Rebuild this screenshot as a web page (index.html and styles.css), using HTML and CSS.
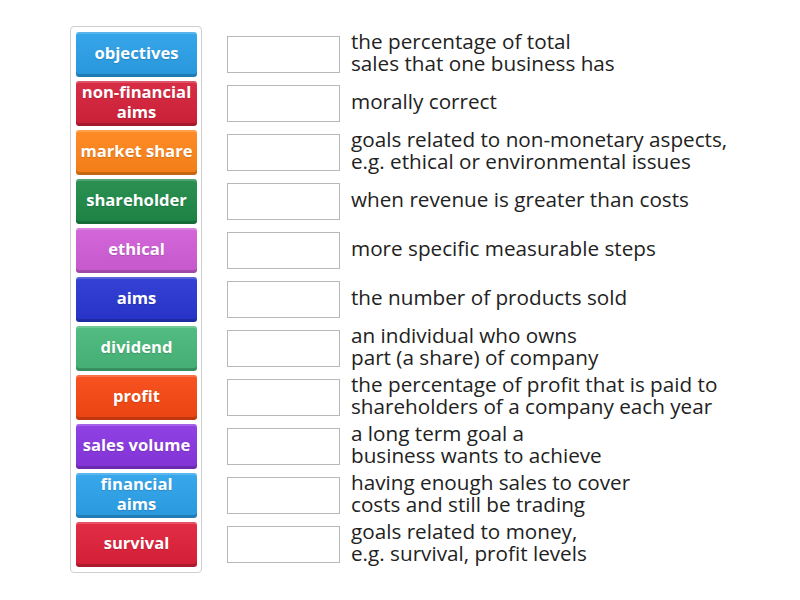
FILE: index.html
```html
<!DOCTYPE html>
<html>
<head>
<meta charset="utf-8">
<link rel="stylesheet" href="styles.css">
</head>
<body>
<div class="page">
  <div class="bank">
    <div class="tile c1">objectives</div>
    <div class="tile c2">non-financial<br>aims</div>
    <div class="tile c3">market share</div>
    <div class="tile c4">shareholder</div>
    <div class="tile c5">ethical</div>
    <div class="tile c6">aims</div>
    <div class="tile c7">dividend</div>
    <div class="tile c8">profit</div>
    <div class="tile c9">sales volume</div>
    <div class="tile c10">financial<br>aims</div>
    <div class="tile c11">survival</div>
  </div>
  <div class="rows">
    <div class="row"><div class="box"></div><div class="def">the percentage of total<br>sales that one business has</div></div>
    <div class="row"><div class="box"></div><div class="def">morally correct</div></div>
    <div class="row"><div class="box"></div><div class="def">goals related to non-monetary aspects,<br>e.g. ethical or environmental issues</div></div>
    <div class="row"><div class="box"></div><div class="def">when revenue is greater than costs</div></div>
    <div class="row"><div class="box"></div><div class="def">more specific measurable steps</div></div>
    <div class="row"><div class="box"></div><div class="def">the number of products sold</div></div>
    <div class="row"><div class="box"></div><div class="def">an individual who owns<br>part (a share) of company</div></div>
    <div class="row"><div class="box"></div><div class="def">the percentage of profit that is paid to<br>shareholders of a company each year</div></div>
    <div class="row"><div class="box"></div><div class="def">a long term goal a<br>business wants to achieve</div></div>
    <div class="row"><div class="box"></div><div class="def">having enough sales to cover<br>costs and still be trading</div></div>
    <div class="row"><div class="box"></div><div class="def">goals related to money,<br>e.g. survival, profit levels</div></div>
  </div>
</div>
</body>
</html>
```
FILE: styles.css
```css
html, body {
  margin: 0;
  padding: 0;
  background: #fff;
}
body {
  font-family: "Open Sans", "Liberation Sans", sans-serif;
  color: #222;
}
.page {
  display: flex;
  align-items: flex-start;
  padding: 26px 0 0 70px;
}
.bank {
  display: flex;
  flex-direction: column;
  gap: 4px;
  padding: 5px 4px 5px 5px;
  border: 1px solid #cfcfcf;
  border-radius: 4px;
}
.tile {
  width: 121px;
  height: 45px;
  box-sizing: border-box;
  border-radius: 3px;
  display: flex;
  align-items: center;
  justify-content: center;
  text-align: center;
  white-space: nowrap;
  color: #fff;
  font-weight: 700;
  font-size: 16.6px;
  line-height: 20px;
  padding: 0 0 3px;
  text-shadow: 0 1px 1px rgba(0,0,0,0.15);
  box-shadow: inset 0 2px 0 rgba(255,255,255,0.18), inset 0 -3px 0 rgba(0,0,0,0.18);
  background-image: linear-gradient(rgba(255,255,255,0.06), rgba(0,0,0,0.06));
}
.c1 { background-color: #2ba0e8; }
.c2 { background-color: #d5213b; }
.c3 { background-color: #ff8519; }
.c4 { background-color: #1e8a48; }
.c5 { background-color: #d15ed8; }
.c6 { background-color: #2836d2; }
.c7 { background-color: #48b87a; }
.c8 { background-color: #f74812; }
.c9 { background-color: #8a36e2; }
.c10 { background-color: #2ca2ea; }
.c11 { background-color: #e0203a; }
.rows {
  display: flex;
  flex-direction: column;
  gap: 4px;
  margin-top: 6px;
  margin-left: 25px;
}
.row {
  height: 45px;
  display: flex;
  align-items: center;
}
.box {
  width: 113px;
  height: 37px;
  box-sizing: border-box;
  border: 1px solid #b8b8b8;
  background: #fff;
  flex: none;
}
.def {
  margin-left: 11px;
  margin-bottom: 6px;
  font-size: 20.7px;
  line-height: 22px;
  white-space: nowrap;
}
```
